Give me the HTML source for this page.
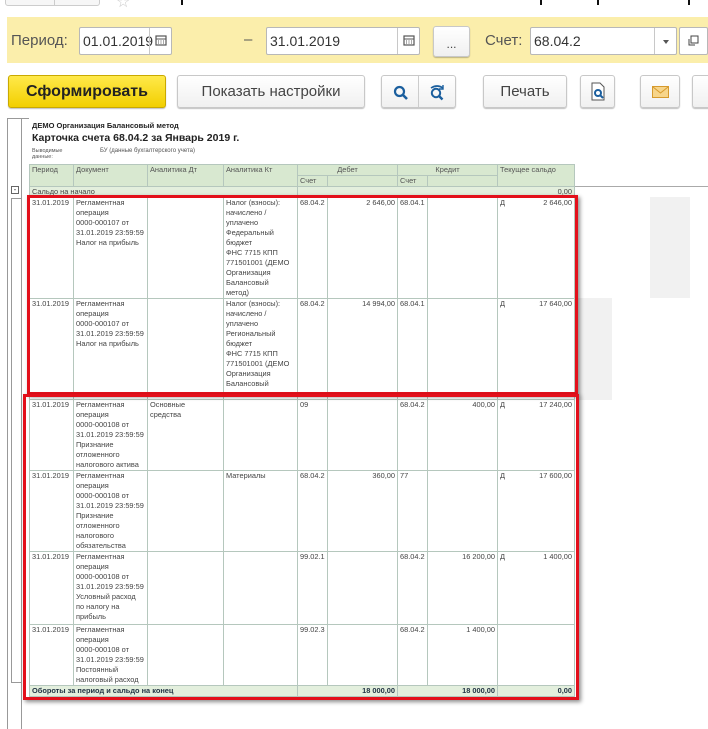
<!DOCTYPE html>
<html><head><meta charset="utf-8"><style>
*{box-sizing:border-box;margin:0;padding:0}
body{width:708px;height:729px;overflow:hidden;background:#fff;position:relative;font-family:"Liberation Sans",Arial,sans-serif}
.a{position:absolute}
.btn{position:absolute;border:1px solid #c8c8c8;border-radius:3px;background:linear-gradient(#fff,#f0f0f0);box-shadow:0 1px 1px rgba(0,0,0,.25);font-size:15px;color:#444;text-align:center}
.inp{position:absolute;border:1px solid #b8b8b8;border-radius:2px;background:#fff;font-size:14px;color:#333;padding-left:3px;line-height:26px}
.inp .cal{position:absolute;right:0;top:0;bottom:0;width:22px;border-left:1px solid #c8c8c8}
table{border-collapse:collapse;table-layout:fixed;font-size:7.4px;color:#444;line-height:10px}
td{border:1px solid #b5c7bd;vertical-align:top;padding:0 2px;overflow:hidden;white-space:nowrap}
.h td{background:#d8e8d0;color:#555}
.g td{background:#e3efdd}
.r{text-align:right}
.red{position:absolute;border:3px solid #e3101b;box-shadow:2px 2px 4px rgba(0,0,0,.45)}
</style></head><body>
<div class="a" style="left:5px;top:-6px;width:95px;height:12px;border:1px solid #ccc;border-radius:3px;background:#f6f6f6"></div>
<div class="a" style="left:54px;top:-6px;width:1px;height:12px;background:#ccc"></div>
<div class="a" style="left:116px;top:-8px;font-size:16px;color:#ccc">☆</div>
<div class="a" style="left:181px;top:0;width:2px;height:5px;background:#111"></div>
<div class="a" style="left:540px;top:0;width:2px;height:5px;background:#111"></div>
<div class="a" style="left:597px;top:0;width:2px;height:5px;background:#111"></div>
<div class="a" style="left:688px;top:0;width:2px;height:5px;background:#111"></div>
<div class="a" style="left:7px;top:17px;width:701px;height:46px;background:#fbeeab"></div>
<div class="a" style="left:11px;top:32px;font-size:15px;color:#555">Период:</div>
<div class="inp" style="left:79px;top:27px;width:93px;height:28px">01.01.2019<div class="cal"><svg width="22" height="26" viewBox="0 0 22 26"><rect x="6" y="8" width="10" height="9" fill="none" stroke="#555" stroke-width="1.2"/><path d="M6 11h10M8 13h1M10.5 13h1M13 13h1M8 15h1M10.5 15h1M13 15h1" stroke="#555"/></svg></div></div>
<div class="a" style="left:244px;top:31px;font-size:15px;color:#555">–</div>
<div class="inp" style="left:266px;top:27px;width:154px;height:28px">31.01.2019<div class="cal"><svg width="22" height="26" viewBox="0 0 22 26"><rect x="6" y="8" width="10" height="9" fill="none" stroke="#555" stroke-width="1.2"/><path d="M6 11h10M8 13h1M10.5 13h1M13 13h1M8 15h1M10.5 15h1M13 15h1" stroke="#555"/></svg></div></div>
<div class="btn" style="left:433px;top:26px;width:37px;height:31px;line-height:34px;font-size:12px">...</div>
<div class="a" style="left:485px;top:32px;font-size:15px;color:#555">Счет:</div>
<div class="inp" style="left:530px;top:27px;width:147px;height:28px">68.04.2<div class="cal" style="width:22px"><div style="position:absolute;left:8px;top:12px;border:3px solid transparent;border-top:4px solid #555"></div></div></div>
<div class="inp" style="left:679px;top:27px;width:29px;height:28px"><svg width="20" height="26" viewBox="0 0 20 26" style="position:absolute;left:4px;top:0"><rect x="7" y="8" width="7" height="7" fill="none" stroke="#444"/><path d="M5 11v6h6" fill="none" stroke="#444"/></svg></div>
<div class="btn" style="left:8px;top:75px;width:158px;height:33px;line-height:32px;background:linear-gradient(#ffe94a,#f2cf00);border-color:#c9a900;font-weight:bold;color:#222;font-size:16px">Сформировать</div>
<div class="btn" style="left:177px;top:75px;width:188px;height:33px;line-height:32px">Показать настройки</div>
<div class="btn" style="left:381px;top:75px;width:75px;height:33px"><div style="position:absolute;left:36px;top:0;bottom:0;width:1px;background:#ccc"></div>
<svg class="a" style="left:10px;top:8px" width="18" height="18"><circle cx="7.5" cy="7.5" r="4.5" fill="none" stroke="#1b5f9e" stroke-width="2.2"/><path d="M11 11l4 4" stroke="#1b5f9e" stroke-width="2.6"/></svg>
<svg class="a" style="left:46px;top:7px" width="20" height="20"><circle cx="8" cy="10" r="4.2" fill="none" stroke="#1b5f9e" stroke-width="2"/><path d="M11 13l3.5 3.5" stroke="#1b5f9e" stroke-width="2.4"/><path d="M3 5q6-4 12 0" fill="none" stroke="#1b5f9e" stroke-width="1.6"/><path d="M15 2v4h-4" fill="none" stroke="#1b5f9e" stroke-width="1.4"/></svg></div>
<div class="btn" style="left:483px;top:75px;width:84px;height:33px;line-height:32px">Печать</div>
<div class="btn" style="left:580px;top:75px;width:35px;height:33px"><svg class="a" style="left:9px;top:6px" width="18" height="20"><path d="M2 1h8l4 4v13H2z" fill="#fff" stroke="#555"/><circle cx="8" cy="11" r="3" fill="none" stroke="#1b5f9e" stroke-width="2"/><path d="M10 13l3 3" stroke="#1b5f9e" stroke-width="2"/></svg></div>
<div class="btn" style="left:640px;top:75px;width:40px;height:33px"><svg class="a" style="left:11px;top:10px" width="18" height="13"><rect x="0.5" y="0.5" width="16" height="11" fill="#f7d58a" stroke="#d69a2d"/><path d="M1 1l7.5 6L16 1" fill="none" stroke="#d69a2d"/></svg></div>
<div class="btn" style="left:692px;top:75px;width:30px;height:33px"></div>
<div class="a" style="left:7px;top:118px;width:1px;height:611px;background:#999"></div>
<div class="a" style="left:21px;top:118px;width:1px;height:611px;background:#999"></div>
<div class="a" style="left:7px;top:118px;width:22px;height:1px;background:#999"></div>
<div class="a" style="left:11px;top:198px;width:11px;height:485px;border:1px solid #999;border-right:none"></div>
<div class="a" style="left:11px;top:186px;width:8px;height:8px;border:1px solid #666;font-size:8px;line-height:5px;text-align:center;color:#333;background:#fff">-</div>
<div class="a" style="left:573px;top:186px;width:135px;height:1px;background:#aaa"></div>
<div class="a" style="left:650px;top:197px;width:40px;height:101px;background:#f1f1f1"></div>
<div class="a" style="left:577px;top:298px;width:35px;height:102px;background:#f1f1f1"></div>
<div class="a" style="left:32px;top:121px;font-size:7.5px;font-weight:bold;color:#222">ДЕМО Организация Балансовый метод</div>
<div class="a" style="left:32px;top:132px;font-size:10.5px;font-weight:bold;color:#222">Карточка счета 68.04.2 за Январь 2019 г.</div>
<div class="a" style="left:32px;top:148px;font-size:5.5px;line-height:6px;color:#555">Выводимые<br>данные:</div>
<div class="a" style="left:100px;top:148px;font-size:6px;color:#555">БУ (данные бухгалтерского учета)</div>
<table class="a" style="left:29px;top:164px;width:545px">
<colgroup><col style="width:44px"><col style="width:74px"><col style="width:76px"><col style="width:74px"><col style="width:30px"><col style="width:70px"><col style="width:30px"><col style="width:70px"><col style="width:77px"></colgroup>
<tr class="h" style="height:11px"><td rowspan="2">Период</td><td rowspan="2">Документ</td><td rowspan="2">Аналитика Дт</td><td rowspan="2">Аналитика Кт</td><td colspan="2" style="text-align:center">Дебет</td><td colspan="2" style="text-align:center">Кредит</td><td rowspan="2">Текущее сальдо</td></tr>
<tr class="h" style="height:11px"><td>Счет</td><td></td><td>Счет</td><td></td></tr>
<tr class="g" style="height:10px"><td colspan="4">Сальдо на начало</td><td colspan="4" style="border-left-color:#e3efdd;border-right-color:#e3efdd"></td><td class="r">0,00</td></tr>
<tr style="height:101px"><td>31.01.2019</td><td>Регламентная<br>операция<br>0000-000107 от<br>31.01.2019 23:59:59<br>Налог на прибыль</td><td></td><td>Налог (взносы):<br>начислено /<br>уплачено<br>Федеральный<br>бюджет<br>ФНС 7715 КПП<br>771501001 (ДЕМО<br>Организация<br>Балансовый<br>метод)</td><td>68.04.2</td><td class="r">2 646,00</td><td>68.04.1</td><td></td><td>Д<span style="float:right">2 646,00</span></td></tr>
<tr style="height:101px"><td>31.01.2019</td><td>Регламентная<br>операция<br>0000-000107 от<br>31.01.2019 23:59:59<br>Налог на прибыль</td><td></td><td>Налог (взносы):<br>начислено /<br>уплачено<br>Региональный<br>бюджет<br>ФНС 7715 КПП<br>771501001 (ДЕМО<br>Организация<br>Балансовый</td><td>68.04.2</td><td class="r">14 994,00</td><td>68.04.1</td><td></td><td>Д<span style="float:right">17 640,00</span></td></tr>
<tr style="height:71px"><td>31.01.2019</td><td>Регламентная<br>операция<br>0000-000108 от<br>31.01.2019 23:59:59<br>Признание<br>отложенного<br>налогового актива</td><td>Основные<br>средства</td><td></td><td>09</td><td></td><td>68.04.2</td><td class="r">400,00</td><td>Д<span style="float:right">17 240,00</span></td></tr>
<tr style="height:80px"><td>31.01.2019</td><td>Регламентная<br>операция<br>0000-000108 от<br>31.01.2019 23:59:59<br>Признание<br>отложенного<br>налогового<br>обязательства</td><td></td><td>Материалы</td><td>68.04.2</td><td class="r">360,00</td><td>77</td><td></td><td>Д<span style="float:right">17 600,00</span></td></tr>
<tr style="height:73px"><td>31.01.2019</td><td>Регламентная<br>операция<br>0000-000108 от<br>31.01.2019 23:59:59<br>Условный расход<br>по налогу на<br>прибыль</td><td></td><td></td><td>99.02.1</td><td></td><td>68.04.2</td><td class="r">16 200,00</td><td>Д<span style="float:right">1 400,00</span></td></tr>
<tr style="height:61px"><td>31.01.2019</td><td>Регламентная<br>операция<br>0000-000108 от<br>31.01.2019 23:59:59<br>Постоянный<br>налоговый расход</td><td></td><td></td><td>99.02.3</td><td></td><td>68.04.2</td><td class="r">1 400,00</td><td></td></tr>
<tr class="g" style="height:11px;font-weight:bold;color:#234"><td colspan="4">Обороты за период и сальдо на конец</td><td colspan="2" class="r">18 000,00</td><td colspan="2" class="r">18 000,00</td><td class="r">0,00</td></tr>
</table>
<div class="red" style="left:27px;top:195px;width:551px;height:200px"></div>
<div class="red" style="left:23px;top:394px;width:556px;height:306px"></div>
</body></html>
